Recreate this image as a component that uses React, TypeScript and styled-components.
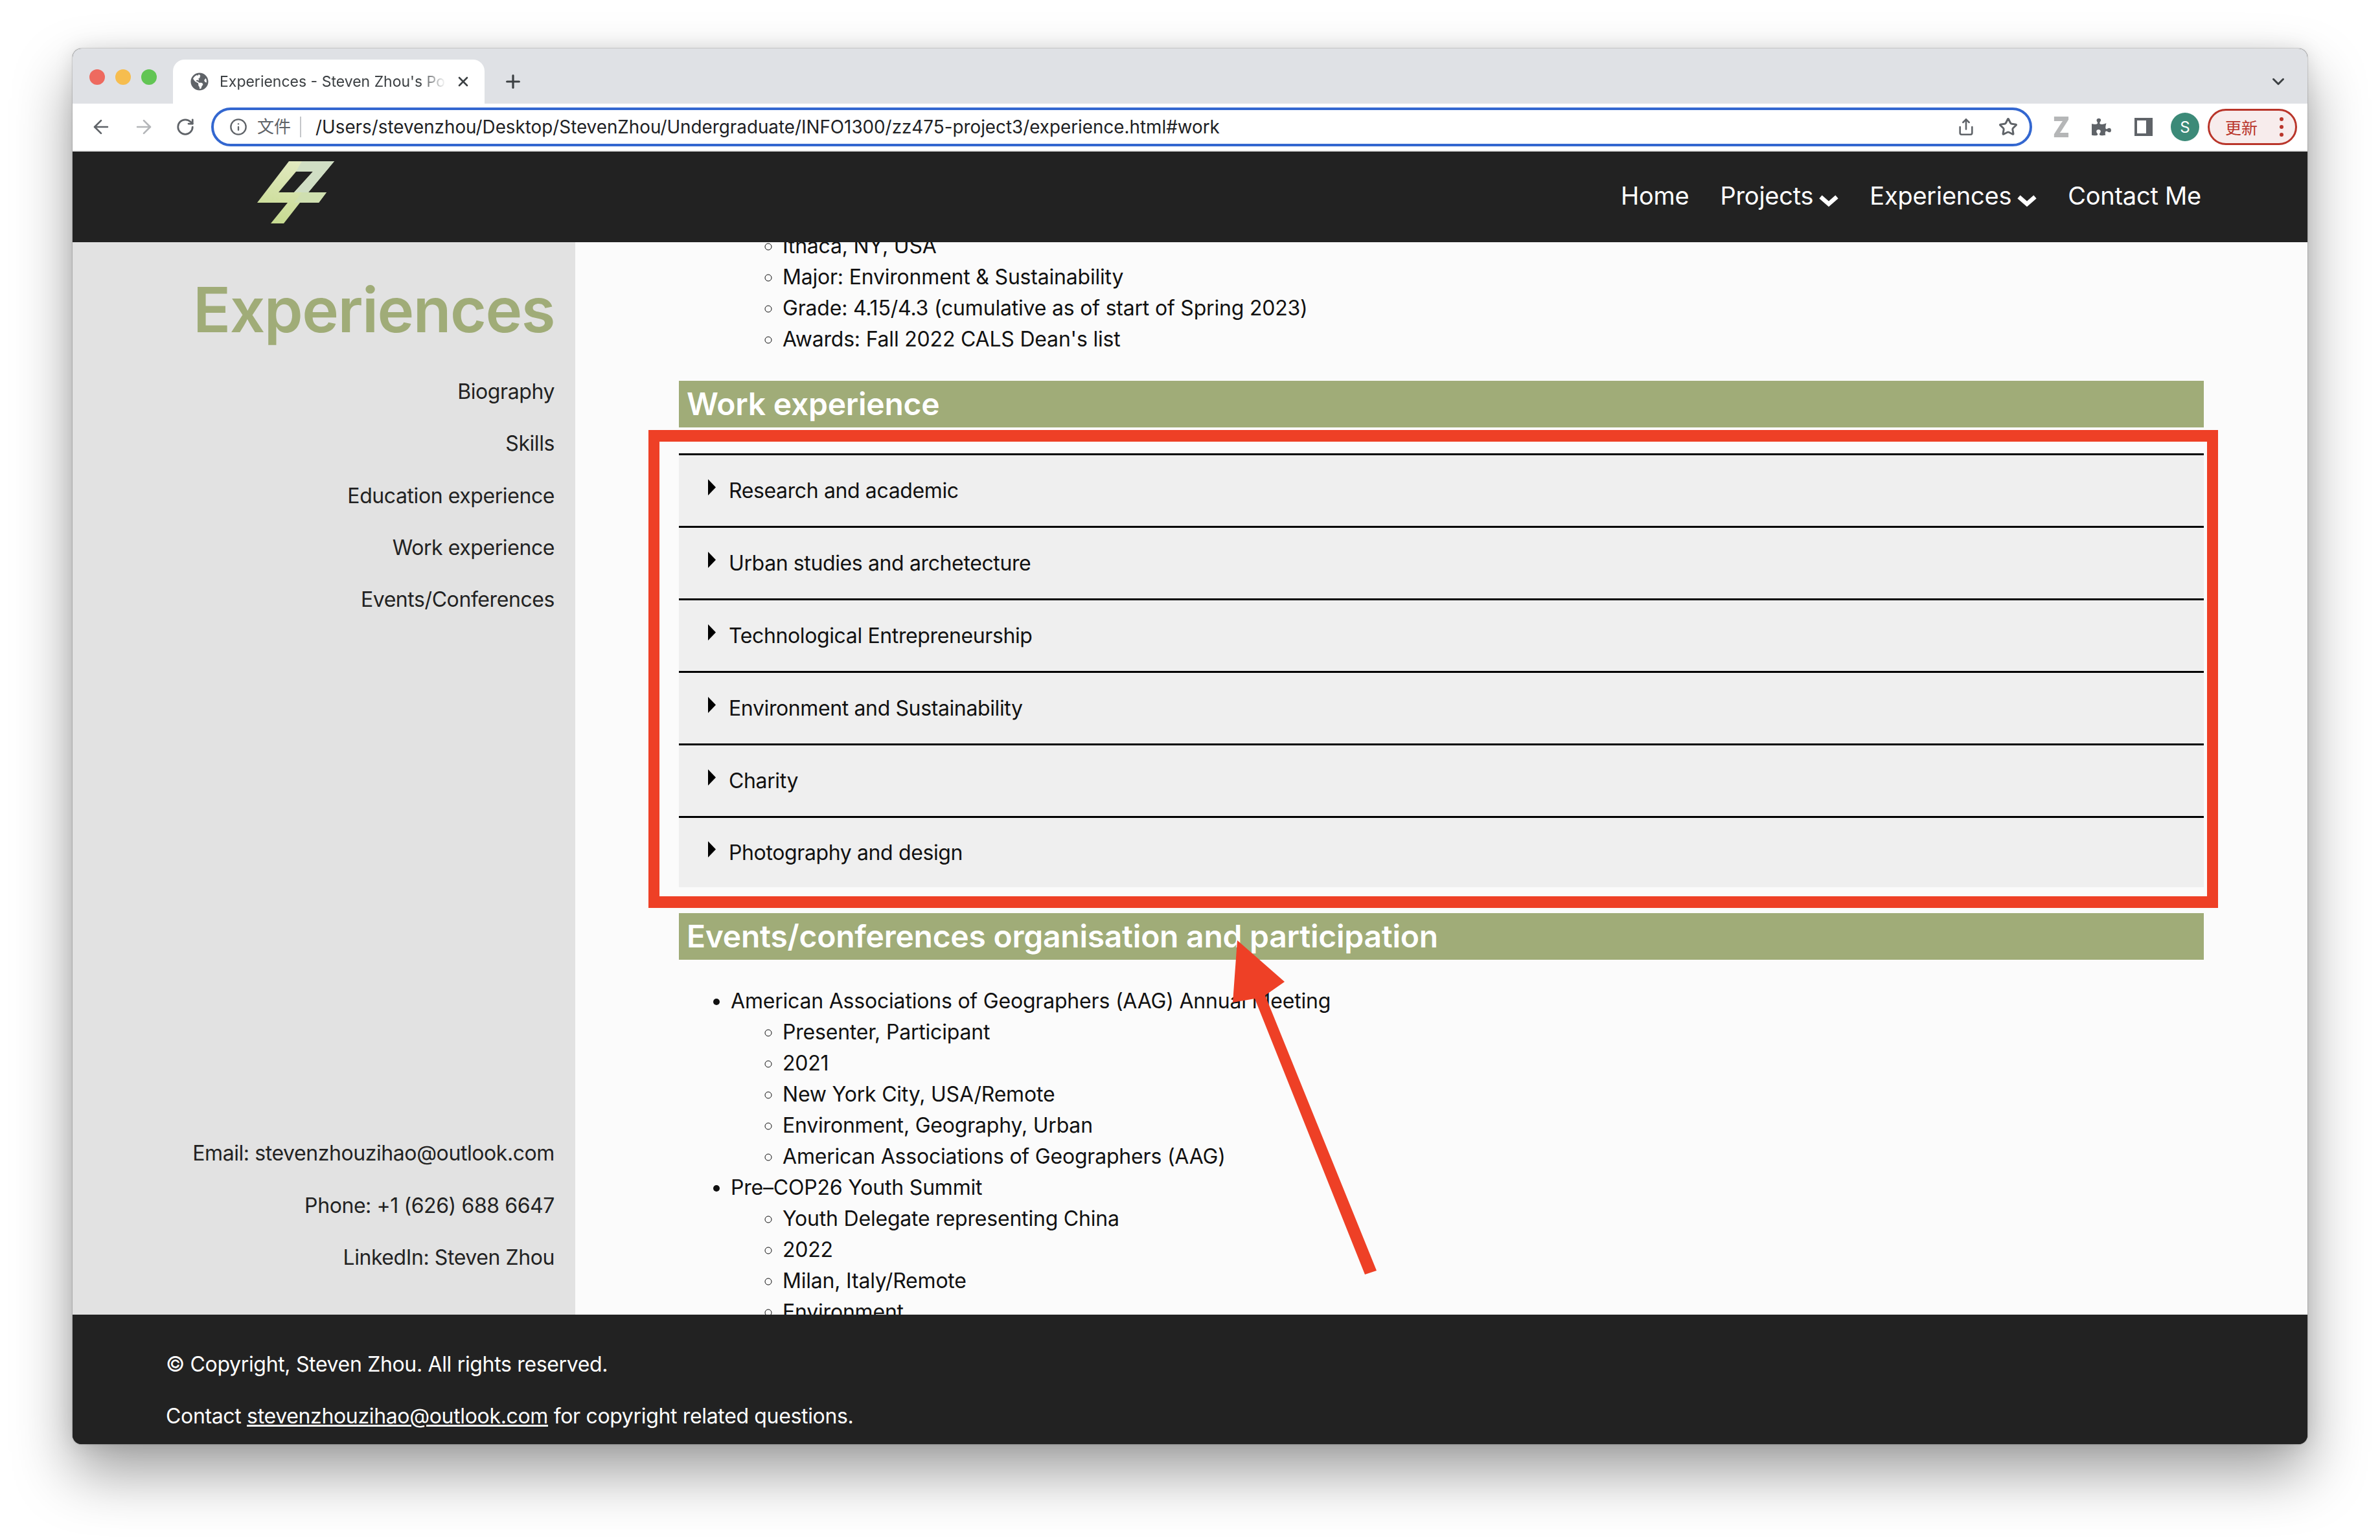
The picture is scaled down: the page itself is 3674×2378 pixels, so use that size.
import React from 'react'
import styled, { createGlobalStyle } from 'styled-components'
import { ArrowLeft, ArrowRight, ChevronDown, Info, Plus, RotateCw, Share, Star, X } from 'lucide-react'
import { FaGlobeAmericas, FaPuzzlePiece } from 'react-icons/fa'

const SANS = `Inter, "Liberation Sans", "Noto Sans CJK SC", sans-serif`

const GlobalStyle = createGlobalStyle`
  html, body {
    margin: 0;
    background: #ffffff;
    font-family: ${SANS};
  }
  * {
    box-sizing: border-box;
  }
`

const WORK_ROWS = [
  'Research and academic',
  'Urban studies and archetecture',
  'Technological Entrepreneurship',
  'Environment and Sustainability',
  'Charity',
  'Photography and design',
]

const Page = () => (
  <Screen>
    <GlobalStyle />
    <Window>
      <TabBar>
        <Lights>
          <Light color='#ee6a5f' />
          <Light color='#f6bd4f' />
          <Light color='#62c554' />
        </Lights>
        <Tab>
          <FaGlobeAmericas size={28} color='#5f6368' />
          <TabTitle>Experiences - Steven Zhou's Portfolio</TabTitle>
          <X size={24} strokeWidth={2.6} color='#3c4043' />
        </Tab>
        <NewTab>
          <Plus size={32} strokeWidth={2.4} color='#3c4043' />
        </NewTab>
        <TabMenu>
          <ChevronDown size={30} strokeWidth={2.4} color='#3c4043' />
        </TabMenu>
      </TabBar>

      <Toolbar>
        <NavIcons>
          <ArrowLeft size={34} strokeWidth={1.9} color='#5f6368' />
          <ArrowRight size={34} strokeWidth={1.9} color='#b4b6b9' />
          <RotateCw size={30} strokeWidth={2.2} color='#5f6368' />
        </NavIcons>
        <AddressBar>
          <Info size={28} strokeWidth={2} color='#5f6368' />
          <Scheme>文件</Scheme>
          <Url>/Users/stevenzhou/Desktop/StevenZhou/Undergraduate/INFO1300/zz475-project3/experience.html#work</Url>
          <Share size={28} strokeWidth={2.2} color='#5f6368' />
          <Star size={30} strokeWidth={2.4} color='#5f6368' />
        </AddressBar>
        <ExtIcons>
          <ExtZ>Z</ExtZ>
          <FaPuzzlePiece size={30} color='#5f6368' />
          <SidePanelIcon width='28' height='28' viewBox='0 0 28 28'>
            <path fill='#5f6368' fillRule='evenodd' d='M0 0h28v28H0zM4 4v20h14V4z' />
          </SidePanelIcon>
          <Avatar>S</Avatar>
        </ExtIcons>
        <UpdatePill>
          <span>更新</span>
          <Kebab>
            <i />
            <i />
            <i />
          </Kebab>
        </UpdatePill>
      </Toolbar>

      <Header>
        <LogoMark width='120' height='96' viewBox='0 0 120 96'>
          <defs>
            <linearGradient id='logoFill' x1='0.2' y1='1' x2='0.5' y2='0'>
              <stop offset='0' stopColor='#c6da90' />
              <stop offset='1' stopColor='#e2e9c0' />
            </linearGradient>
          </defs>
          <path
            fill='url(#logoFill)'
            fillRule='evenodd'
            d='M50 0H120L80 48H108L96 64H67L42 96H22L48 64H1ZM61 16 34 48H58L87 16Z'
          />
          <path fill='#d0dec4' d='M70 0H120L80 48H58L87 16H61Z' />
          <path fill='#cfdfb0' d='M70 48H108L96 64H58Z' />
        </LogoMark>
        <HeaderNav>
          <NavLink>Home</NavLink>
          <NavLink>
            Projects
            <NavChevron />
          </NavLink>
          <NavLink>
            Experiences
            <NavChevron />
          </NavLink>
          <NavLink>Contact Me</NavLink>
        </HeaderNav>
      </Header>

      <Body>
        <Sidebar>
          <div>
            <SideTitle>Experiences</SideTitle>
            <SideList>
              <SideItem>Biography</SideItem>
              <SideItem>Skills</SideItem>
              <SideItem>Education experience</SideItem>
              <SideItem>Work experience</SideItem>
              <SideItem>Events/Conferences</SideItem>
            </SideList>
          </div>
          <SideList>
            <SideItem>Email: stevenzhouzihao@outlook.com</SideItem>
            <SideItem>Phone: +1 (626) 688 6647</SideItem>
            <SideItem>LinkedIn: Steven Zhou</SideItem>
          </SideList>
        </Sidebar>

        <Main>
          <Scrolled>
            <SubList>
              <li>Ithaca, NY, USA</li>
              <li>Major: Environment &amp; Sustainability</li>
              <li>Grade: 4.15/4.3 (cumulative as of start of Spring 2023)</li>
              <li>Awards: Fall 2022 CALS Dean's list</li>
            </SubList>

            <SectionTitle>Work experience</SectionTitle>
            <Rows>
              {WORK_ROWS.map((row) => (
                <Row key={row}>
                  <Caret />
                  {row}
                </Row>
              ))}
            </Rows>

            <SectionTitle>Events/conferences organisation and participation</SectionTitle>
            <TopList>
              <li>
                American Associations of Geographers (AAG) Annual Meeting
                <SubList>
                  <li>Presenter, Participant</li>
                  <li>2021</li>
                  <li>New York City, USA/Remote</li>
                  <li>Environment, Geography, Urban</li>
                  <li>American Associations of Geographers (AAG)</li>
                </SubList>
              </li>
              <li>
                Pre–COP26 Youth Summit
                <SubList>
                  <li>Youth Delegate representing China</li>
                  <li>2022</li>
                  <li>Milan, Italy/Remote</li>
                  <li>Environment</li>
                </SubList>
              </li>
            </TopList>
          </Scrolled>
        </Main>
      </Body>

      <Footer>
        <FooterLine>© Copyright, Steven Zhou. All rights reserved.</FooterLine>
        <FooterLine>
          Contact <u>stevenzhouzihao@outlook.com</u> for copyright related questions.
        </FooterLine>
      </Footer>

      <Highlight />
      <ArrowMark width='240' height='530' viewBox='0 0 240 530'>
        <polygon fill='#ee4026' points='7,0 80,64 50,85 222,510 204,516 34,90 0,96' />
      </ArrowMark>
    </Window>
  </Screen>
)

const NavChevron = () => (
  <ChevronSvg width='30' height='20' viewBox='0 0 30 20'>
    <path d='M2.5 4 15 15 27.5 4' fill='none' stroke='#ffffff' strokeWidth='6.5' />
  </ChevronSvg>
)

const Caret = () => (
  <CaretSvg width='14' height='25' viewBox='0 0 14 25'>
    <path d='M1 0 13 12.5 1 25Z' fill='#000000' />
  </CaretSvg>
)

export default function App() {
  return <Page />
}

const Screen = styled.div`
  width: 3674px;
  height: 2378px;
  padding: 75px 112px 148px;
  overflow: hidden;
  background: #ffffff;
`

const Window = styled.div`
  position: relative;
  height: 2155px;
  display: flex;
  flex-direction: column;
  border-radius: 14px;
  background: #222222;
  box-shadow: 0 0 2px rgba(0, 0, 0, 0.45), 0 44px 90px rgba(0, 0, 0, 0.38), 0 0 30px rgba(0, 0, 0, 0.1);
`

const TabBar = styled.div`
  flex: none;
  height: 85px;
  display: flex;
  align-items: flex-end;
  padding-left: 26px;
  background: #dfe1e5;
  border-radius: 14px 14px 0 0;
`

const Lights = styled.div`
  display: flex;
  gap: 16px;
  align-self: flex-start;
  margin-top: 32px;
`

const Light = styled.span<{ color: string }>`
  width: 24px;
  height: 24px;
  border-radius: 50%;
  background: ${(p) => p.color};
`

const Tab = styled.div`
  width: 481px;
  height: 68px;
  margin-left: 25px;
  padding: 0 20px 0 27px;
  display: flex;
  align-items: center;
  background: #ffffff;
  border-radius: 18px 18px 0 0;
`

const TabTitle = styled.div`
  width: 350px;
  margin: 0 14px 0 17px;
  overflow: hidden;
  white-space: nowrap;
  font-size: 23px;
  color: #3c4043;
  -webkit-mask-image: linear-gradient(to right, #000 88%, transparent 100%);
  mask-image: linear-gradient(to right, #000 88%, transparent 100%);
`

const NewTab = styled.div`
  height: 68px;
  margin-left: 28px;
  display: flex;
  align-items: center;
`

const TabMenu = styled.div`
  height: 68px;
  margin-left: auto;
  padding-right: 30px;
  display: flex;
  align-items: center;
`

const Toolbar = styled.div`
  flex: none;
  height: 74px;
  display: flex;
  align-items: center;
  padding-right: 16px;
  background: #ffffff;
  border-bottom: 2px solid #e8e8e8;
`

const NavIcons = styled.div`
  width: 214px;
  padding-left: 27px;
  display: flex;
  align-items: center;
  gap: 32px;
`

const AddressBar = styled.div`
  width: 2811px;
  height: 60px;
  padding: 0 18px 0 24px;
  display: flex;
  align-items: center;
  border: 4px solid #3367d0;
  border-radius: 30px;
  color: #5f6368;

  svg:last-child {
    margin-left: 36px;
  }
`

const Scheme = styled.span`
  padding: 0 14px 0 15px;
  margin-right: 22px;
  border-right: 2px solid #c4c6c9;
  font-size: 26px;
  line-height: 32px;
  color: #5f6368;
`

const Url = styled.span`
  flex: 1;
  white-space: nowrap;
  font-size: 27.8px;
  color: #202124;
`

const ExtIcons = styled.div`
  margin-left: 30px;
  display: flex;
  align-items: center;
  gap: 36px;
`

const ExtZ = styled.span`
  width: 26px;
  display: block;
  font-size: 44px;
  font-weight: 900;
  line-height: 44px;
  text-align: center;
  color: #b5b6b7;
  transform: scaleX(0.85);
`

const SidePanelIcon = styled.svg`
  display: block;
`

const Avatar = styled.span`
  width: 44px;
  height: 44px;
  margin-left: -8px;
  display: flex;
  align-items: center;
  justify-content: center;
  border-radius: 50%;
  background: #3c8a78;
  font-size: 24px;
  color: #ffffff;
`

const UpdatePill = styled.div`
  width: 138px;
  height: 56px;
  margin-left: auto;
  padding: 0 18px 0 24px;
  display: flex;
  align-items: center;
  justify-content: space-between;
  border: 3px solid #b9352a;
  border-radius: 28px;
  background: #f7ecec;
  font-size: 25px;
  color: #b9352a;
`

const Kebab = styled.span`
  display: flex;
  flex-direction: column;
  gap: 6px;

  i {
    width: 6px;
    height: 6px;
    border-radius: 50%;
    background: #b9352a;
  }
`

const Header = styled.header`
  flex: none;
  height: 140px;
  position: relative;
  z-index: 1;
  display: flex;
  align-items: center;
  justify-content: space-between;
  padding: 0 164px 0 284px;
  background: #222222;
`

const LogoMark = styled.svg`
  display: block;
  margin-top: -14px;
`

const HeaderNav = styled.nav`
  display: flex;
  align-items: center;
  gap: 48px;
  padding-bottom: 4px;
`

const NavLink = styled.a`
  display: flex;
  align-items: center;
  font-size: 38px;
  line-height: 48px;
  letter-spacing: -0.25px;
  color: #ffffff;
`

const ChevronSvg = styled.svg`
  display: block;
  margin: 16px 0 0 9px;
`

const Body = styled.div`
  flex: 1;
  min-height: 0;
  display: flex;
`

const Sidebar = styled.aside`
  flex: none;
  width: 776px;
  padding: 46px 32px 64px 0;
  display: flex;
  flex-direction: column;
  justify-content: space-between;
  background: #e2e2e2;
  text-align: right;
`

const SideTitle = styled.h1`
  margin: 0 0 45px;
  font-size: 96px;
  font-weight: 600;
  line-height: 116px;
  letter-spacing: -1.5px;
  color: #a0ac78;
`

const SideList = styled.div`
  display: flex;
  flex-direction: column;
  gap: 32.3px;
`

const SideItem = styled.div`
  font-size: 32px;
  line-height: 48px;
  letter-spacing: -0.42px;
  color: #222222;
`

const Main = styled.main`
  flex: 1;
  min-width: 0;
  overflow: hidden;
  padding: 0 160px;
  background: #fbfbfb;
`

const Scrolled = styled.div`
  margin-top: -18px;
  font-size: 32px;
  line-height: 48px;
  letter-spacing: -0.2px;
  color: #111111;
`

const SubList = styled.ul`
  margin: 0;
  padding: 0 0 0 160px;
  list-style: circle;
  li > & {
    padding-left: 80px;
  }
`

const TopList = styled.ul`
  margin: 40px 0 0;
  padding: 0 0 0 80px;
  list-style: disc;
`

const SectionTitle = styled.h2`
  height: 72px;
  margin: 40px 0;
  padding-left: 12px;
  background: #a0ac78;
  font-size: 48px;
  font-weight: 600;
  line-height: 72px;
  letter-spacing: -0.25px;
  color: #ffffff;
`

const Rows = styled.div`
  display: flex;
  flex-direction: column;
`

const Row = styled.div`
  height: 112px;
  display: flex;
  align-items: center;
  padding-left: 44px;
  border-top: 3px solid #000000;
  background: #efefef;
  letter-spacing: -0.38px;

  &:last-child {
    height: 110px;
  }
`

const CaretSvg = styled.svg`
  display: block;
  margin: -10px 19px 0 0;
`

const Footer = styled.footer`
  flex: none;
  height: 200px;
  padding: 53px 144px 0;
  background: #222222;
  border-radius: 0 0 14px 14px;
`

const FooterLine = styled.div`
  margin-bottom: 32px;
  font-size: 32px;
  line-height: 48px;
  letter-spacing: -0.34px;
  color: #ffffff;
`

const Highlight = styled.div`
  position: absolute;
  left: 889px;
  top: 589px;
  width: 2423px;
  height: 738px;
  border: solid #ee4026;
  border-width: 18px 17px;
`

const ArrowMark = styled.svg`
  position: absolute;
  left: 1791px;
  top: 1377px;
`
